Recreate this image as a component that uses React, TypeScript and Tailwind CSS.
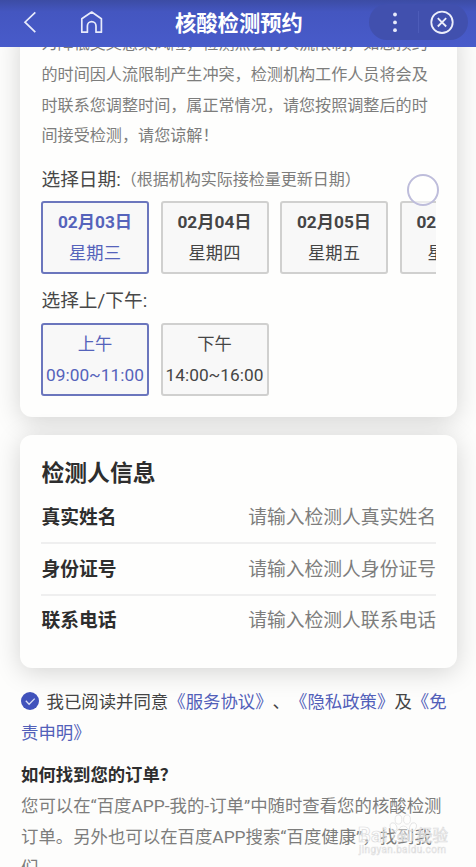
/**
 * Nucleic acid test booking page
 */

import { clsx } from 'clsx';

const DATES = [
  { date: '02月03日', weekday: '星期三' },
  { date: '02月04日', weekday: '星期四' },
  { date: '02月05日', weekday: '星期五' },
  { date: '02月06日', weekday: '星期六' },
];

const PERIODS = [
  { label: '上午', time: '09:00~11:00' },
  { label: '下午', time: '14:00~16:00' },
];

const FIELDS = [
  { label: '真实姓名', placeholder: '请输入检测人真实姓名' },
  { label: '身份证号', placeholder: '请输入检测人身份证号' },
  { label: '联系电话', placeholder: '请输入检测人联系电话' },
];

const Header = () => (
  <header className="relative z-10 flex h-[47px] shrink-0 items-center bg-linear-to-b from-[#3c4ca4] via-[#4456c0] via-25% to-[#485bca] text-white">
    <svg className="mb-[3px] ml-[23px] h-[24px] w-[14px] shrink-0" viewBox="0 0 14 24" fill="none" stroke="#e8ebfb" strokeWidth="1.7">
      <path d="M12.3 2.3 2 12.2l10.3 10" />
    </svg>
    <svg className="mb-[3px] ml-[43px] h-[24px] w-[24px] shrink-0" viewBox="0 0 24 24" fill="none" stroke="#e8ebfb" strokeWidth="1.7" strokeLinejoin="round">
      <path d="M1.8 8.8 11.7 2l9.7 6.8v13.4H16V16a4.3 4.3 0 0 0-8.6 0v6.2H1.8z" />
    </svg>
    <h1 className="ml-[71px] text-[21.3px] leading-none font-bold">核酸检测预约</h1>
    <div className="mr-[8px] mb-[3px] ml-auto flex h-[36px] w-[99px] shrink-0 items-center rounded-full bg-[#4150ae]">
      <svg className="ml-[22.5px] h-[22px] w-[6px]" viewBox="0 0 6 22" fill="#e8ebfb">
        <circle cx="3" cy="3.5" r="1.9" />
        <circle cx="3" cy="11.4" r="1.9" />
        <circle cx="3" cy="19.2" r="1.9" />
      </svg>
      <div className="ml-[20px] h-[22px] w-px bg-[#4d5cb9]" />
      <svg className="ml-[11.5px] h-[24px] w-[24px]" viewBox="0 0 24 24" fill="none" stroke="#eceefb" strokeWidth="1.8">
        <circle cx="12" cy="12.3" r="10.7" />
        <path d="m7.8 8.1 8.4 8.4M16.2 8.1l-8.4 8.4" />
      </svg>
    </div>
  </header>
);

interface OptionProps {
  title: string;
  detail: string;
  selected: boolean;
  boldTitle?: boolean;
}

const Option = ({ title, detail, selected, boldTitle }: OptionProps) => (
  <div
    className={clsx(
      'h-[73px] w-[108px] shrink-0 rounded-[3px] border-2 bg-[#f8f8f8] pt-[4px] text-center text-[17.3px] leading-[31px] whitespace-nowrap',
      selected ? 'border-[#6b76bd] text-[#5563bb]' : 'border-[#d0d0cf] text-[#454545]',
    )}
  >
    <div className={clsx(boldTitle && 'font-bold')}>{title}</div>
    <div>{detail}</div>
  </div>
);

const BookingCard = () => (
  <section className="-mt-[18px] rounded-b-xl bg-[#fefefd] px-[21px] pb-[21px] shadow-[0_4px_26px_rgba(0,0,0,0.17)]">
    <p className="pl-[0.5px] text-[16.1px] leading-[30.8px] whitespace-nowrap text-[#7d7d7c]">
      为降低交叉感染风险，检测点会有人流限制，如您预约
      <br />
      的时间因人流限制产生冲突，检测机构工作人员将会及
      <br />
      时联系您调整时间，属正常情况，请您按照调整后的时
      <br />
      间接受检测，请您谅解！
    </p>
    <div className="mt-[12.8px] flex h-[31px] items-center pl-[0.5px] whitespace-nowrap">
      <span className="text-[18.7px] text-[#484848]">选择日期:</span>
      <span className="text-[16px] text-[#7d7d7c]">（根据机构实际接检量更新日期）</span>
    </div>
    <div className="mt-[5px] flex gap-[11.5px] overflow-hidden">
      {DATES.map((d, i) => (
        <Option key={d.date} title={d.date} detail={d.weekday} selected={i === 0} boldTitle />
      ))}
    </div>
    <div className="mt-[12px] h-[31px] pl-[0.5px] text-[18.7px] leading-[31px] text-[#484848]">选择上/下午:</div>
    <div className="mt-[6px] flex gap-[11.5px]">
      {PERIODS.map((p, i) => (
        <Option key={p.label} title={p.label} detail={p.time} selected={i === 0} />
      ))}
    </div>
  </section>
);

const PersonCard = () => (
  <section className="mt-[18px] h-[233px] rounded-xl bg-[#fefefd] px-[21px] pt-[22px] shadow-[0_4px_26px_rgba(0,0,0,0.17)]">
    <h2 className="pl-[0.5px] text-[22.8px] leading-[34px] font-bold text-[#2e2e2e]">检测人信息</h2>
    <div className="pt-[1.5px]">
      {FIELDS.map((f) => (
        <div
          key={f.label}
          className="flex h-[51.6px] items-center justify-between border-b-2 border-[#efefef] pt-[2px] pl-[0.5px] text-[18.8px] last:border-transparent"
        >
          <span className="font-bold text-[#2e2e2e]">{f.label}</span>
          <span className="text-[#7d7d7c]">{f.placeholder}</span>
        </div>
      ))}
    </div>
  </section>
);

const Agreement = () => (
  <div className="mt-[19px] text-[17.4px] leading-[30.7px] text-[#444]">
    <p className="whitespace-nowrap">
      <svg className="mr-[7.5px] mb-[4px] inline-block h-[18px] w-[18px] align-middle" viewBox="0 0 18 18" fill="none">
        <circle cx="9" cy="9" r="9" fill="#4052bb" />
        <path d="m4.8 8.8 3.3 3.4 5.6-5.6" stroke="#d9ddf5" strokeWidth="1.3" />
      </svg>
      我已阅读并同意
      <span className="text-[#5260b9]">《服务协议》</span>、<span className="text-[#5260b9]">《隐私政策》</span>及
      <span className="text-[#5260b9]">
        《免
        <br />
        责申明》
      </span>
    </p>
  </div>
);

const Watermark = () => (
  <svg className="absolute top-[811px] left-[355px] h-[46px] w-[96px]" viewBox="0 0 96 46">
    <g fill="#fff" fillOpacity="0.4" stroke="#dcdcdc" strokeWidth="0.7">
      <ellipse cx="38.5" cy="16" rx="3.2" ry="4.4" transform="rotate(-20 38.5 16)" />
      <ellipse cx="43.5" cy="8.5" rx="3.4" ry="4.6" />
      <ellipse cx="52" cy="8.5" rx="3.4" ry="4.6" />
      <ellipse cx="58" cy="16" rx="3.2" ry="4.4" transform="rotate(20 58 16)" />
      <path d="M48.5 15c-3 0-4.5 3-7 5.500-5 4-4 10 1 10 3 0 9-.5 12 0 5 .5 6-6 1-10-2.500-2.500-4-5.500-7-5.500z" />
      <text x="3" y="30.5" fontSize="20" fontWeight="bold" textLength="29">
        Bai
      </text>
      <text x="42" y="29" fontSize="11">
        du
      </text>
      <text x="62" y="30" fontSize="15.5">
        经验
      </text>
      <text x="4" y="42" fontSize="10" textLength="87" strokeWidth="0.5">
        jingyan.baidu.com
      </text>
    </g>
  </svg>
);

export default function App() {
  return (
    <div className="relative flex h-[867px] w-[476px] flex-col overflow-hidden bg-[#fdfdfc] font-[Roboto,'Noto_Sans_CJK_SC',sans-serif] [text-spacing-trim:space-all]">
      <Header />
      <main className="min-h-0 flex-1 overflow-hidden pr-[19px] pl-[20px]">
        <BookingCard />
        <PersonCard />
        <div className="pl-px">
          <Agreement />
          <h3 className="mt-[12px] text-[17.35px] leading-[31px] font-bold text-[#2e2e2e]">如何找到您的订单？</h3>
          <p className="text-[17.4px] leading-[30.7px] whitespace-nowrap text-[#7d7d7c]">
            您可以在“百度APP-我的-订单”中随时查看您的核酸检测
            <br />
            订单。另外也可以在百度APP搜索“百度健康”，找到我
            <br />
            们
          </p>
        </div>
      </main>
      {/* touch indicator */}
      <div className="absolute top-[174px] left-[407px] h-[32px] w-[32px] rounded-full border-2 border-[#bebddb] bg-white/60" />
      <Watermark />
    </div>
  );
}
